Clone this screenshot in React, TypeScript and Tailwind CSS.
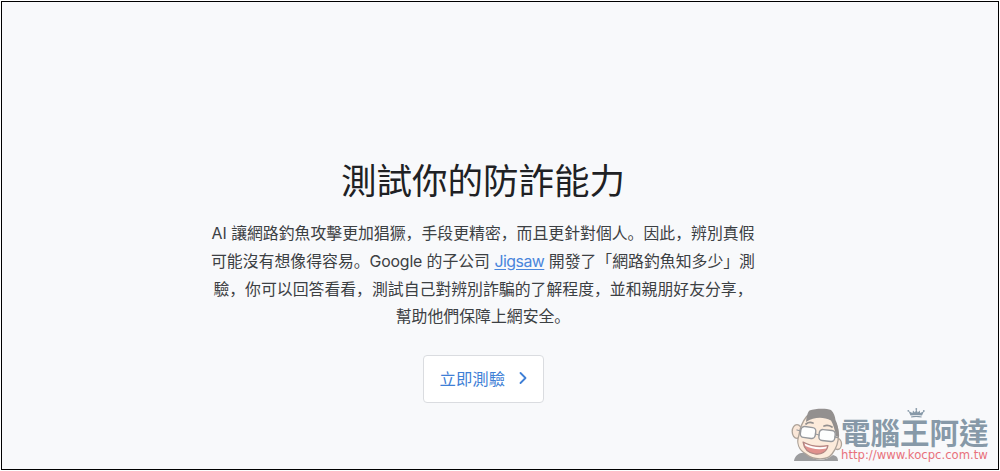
import { ChevronRight } from "lucide-react";

function Mascot() {
  return (
    <svg className="opacity-85" width="54" height="56" viewBox="0 0 54 56" fill="none" strokeLinecap="round" strokeLinejoin="round">
      {/* shirt */}
      <path d="M3 54 C4 48 9 45 14 46 C22 54 34 55 42 48 C46 49 47 51 47 54 Z" fill="#8d8d90" />
      {/* ears and face */}
      <ellipse cx="6" cy="24.5" rx="4.8" ry="6.8" fill="#fbe5d2" stroke="#a09488" strokeWidth="1.3" />
      <ellipse cx="46.5" cy="37" rx="4" ry="5.5" fill="#fbe5d2" stroke="#a09488" strokeWidth="1.3" />
      <path
        d="M16 9 C12 14 9 20 8 28 C5 36 8 43 15 47 C22 53 36 54 41 47 C45 42 47.5 35 47.5 28 C47 20 44 14 40 10 C33 6 25 6 16 9 Z"
        fill="#fde9d6"
        stroke="#a09488"
        strokeWidth="1.3"
      />
      {/* hair */}
      <path d="M15 15 C15.5 11 16 6 18.5 3.5 C24 1.5 35 1 40 3 C43 6 44 9 44.5 13 C46.5 17 48 23 48 30 L45 29 C44 23 42 17 40 13.5 C32 9.5 23 10 15 15 Z" fill="#827e7d" />
      <path d="M15 17 Q18 14.5 22 16 M33 19 Q37 17.5 41 20" stroke="#827e7d" strokeWidth="1.8" />
      {/* glasses */}
      <rect x="9.5" y="20" width="15" height="11" rx="3.6" transform="rotate(8 17 26)" fill="#fff" stroke="#85888c" strokeWidth="1.4" />
      <rect x="28" y="23" width="16" height="11" rx="3.6" transform="rotate(6 36 29)" fill="#fff" stroke="#85888c" strokeWidth="1.4" />
      <path d="M24.5 27 L28 28 M9.5 24 L6 23 M44 30 L46.5 30.5" stroke="#85888c" strokeWidth="1.3" />
      {/* mouth */}
      <path d="M12 35 C19 39 29 40 37 38.5 C36 45 30 48 24 47 C17 46 13 42 12 35 Z" fill="#dd7f7a" stroke="#a3736e" strokeWidth="1.2" />
      <path d="M13.5 36.5 C20 40 29 41 36 39.5 L35 41.5 C28 43 20 42 14.5 39 Z" fill="#fff" />
    </svg>
  );
}

function Watermark() {
  return (
    <div className="absolute left-[791px] top-[407px] flex h-14 w-[200px]">
      <Mascot />
      <svg className="absolute left-[116px] top-px" width="18" height="10" viewBox="0 0 18 10" fill="#8799a8">
        <path d="M3.5 7.5 L1.5 3 L5.5 5 L6 2.5 L8 4.5 L9.3 1 L10.7 4.5 L12.8 2.5 L13 5 L17 3.2 L15 7.5 Q9 6.3 3.5 7.5 Z" />
        <circle cx="1.3" cy="2.8" r="0.9" />
        <circle cx="9.3" cy="1" r="0.9" />
        <circle cx="16.8" cy="3" r="0.9" />
        <path d="M4 8.4 Q9 7.3 14.7 8.4 L14.5 9.6 Q9 8.6 4.2 9.6 Z" />
      </svg>
      <div className="absolute left-[50px] top-[9px]">
        <div className="font-['Noto_Sans_CJK_TC',sans-serif] text-[29.5px] leading-[31px] font-bold whitespace-nowrap text-[#8799a8]">
          電腦王阿達
        </div>
        <div className="mt-px font-['DejaVu_Sans',sans-serif] text-[11.65px] leading-[14px] whitespace-nowrap text-[#e8717b]">
          http://www.kocpc.com.tw
        </div>
      </div>
    </div>
  );
}

export default function App() {
  return (
    <div className="h-[471px] w-[1000px] bg-white p-px">
      <div className="relative h-[469px] w-[998px] overflow-hidden border border-black bg-[#f8f9fb] font-['Inter','Noto_Sans_CJK_SC',sans-serif]">
        <main className="flex w-[962px] flex-col items-center pt-[154px]">
          <h1 className="text-[35.5px] leading-[52px] whitespace-nowrap text-[#202124]">測試你的防詐能力</h1>
          <p className="mt-3 text-center text-[15.87px] leading-[27.8px] whitespace-nowrap text-[#3c4043]">
            AI 讓網路釣魚攻擊更加猖獗，手段更精密，而且更針對個人。因此，辨別真假
            <br />
            可能沒有想像得容易。<span className="tracking-[-0.2px]">Google</span> 的子公司{" "}
            <a href="#" className="tracking-[-0.5px] text-[#4a86dc] underline underline-offset-2">
              Jigsaw
            </a>{" "}
            開發了「網路釣魚知多少」測
            <br />
            驗，你可以回答看看，測試自己對辨別詐騙的了解程度，並和親朋好友分享，
            <br />
            幫助他們保障上網安全。
          </p>
          <button className="mt-6 flex h-12 w-[121px] items-center gap-2 rounded border border-[#dadce0] bg-white pl-4 text-[16.4px] whitespace-nowrap text-[#3f7fd6]">
            立即測驗
            <ChevronRight size={20} strokeWidth={2.2} className="-mt-0.5" />
          </button>
        </main>
      </div>
      <Watermark />
    </div>
  );
}
